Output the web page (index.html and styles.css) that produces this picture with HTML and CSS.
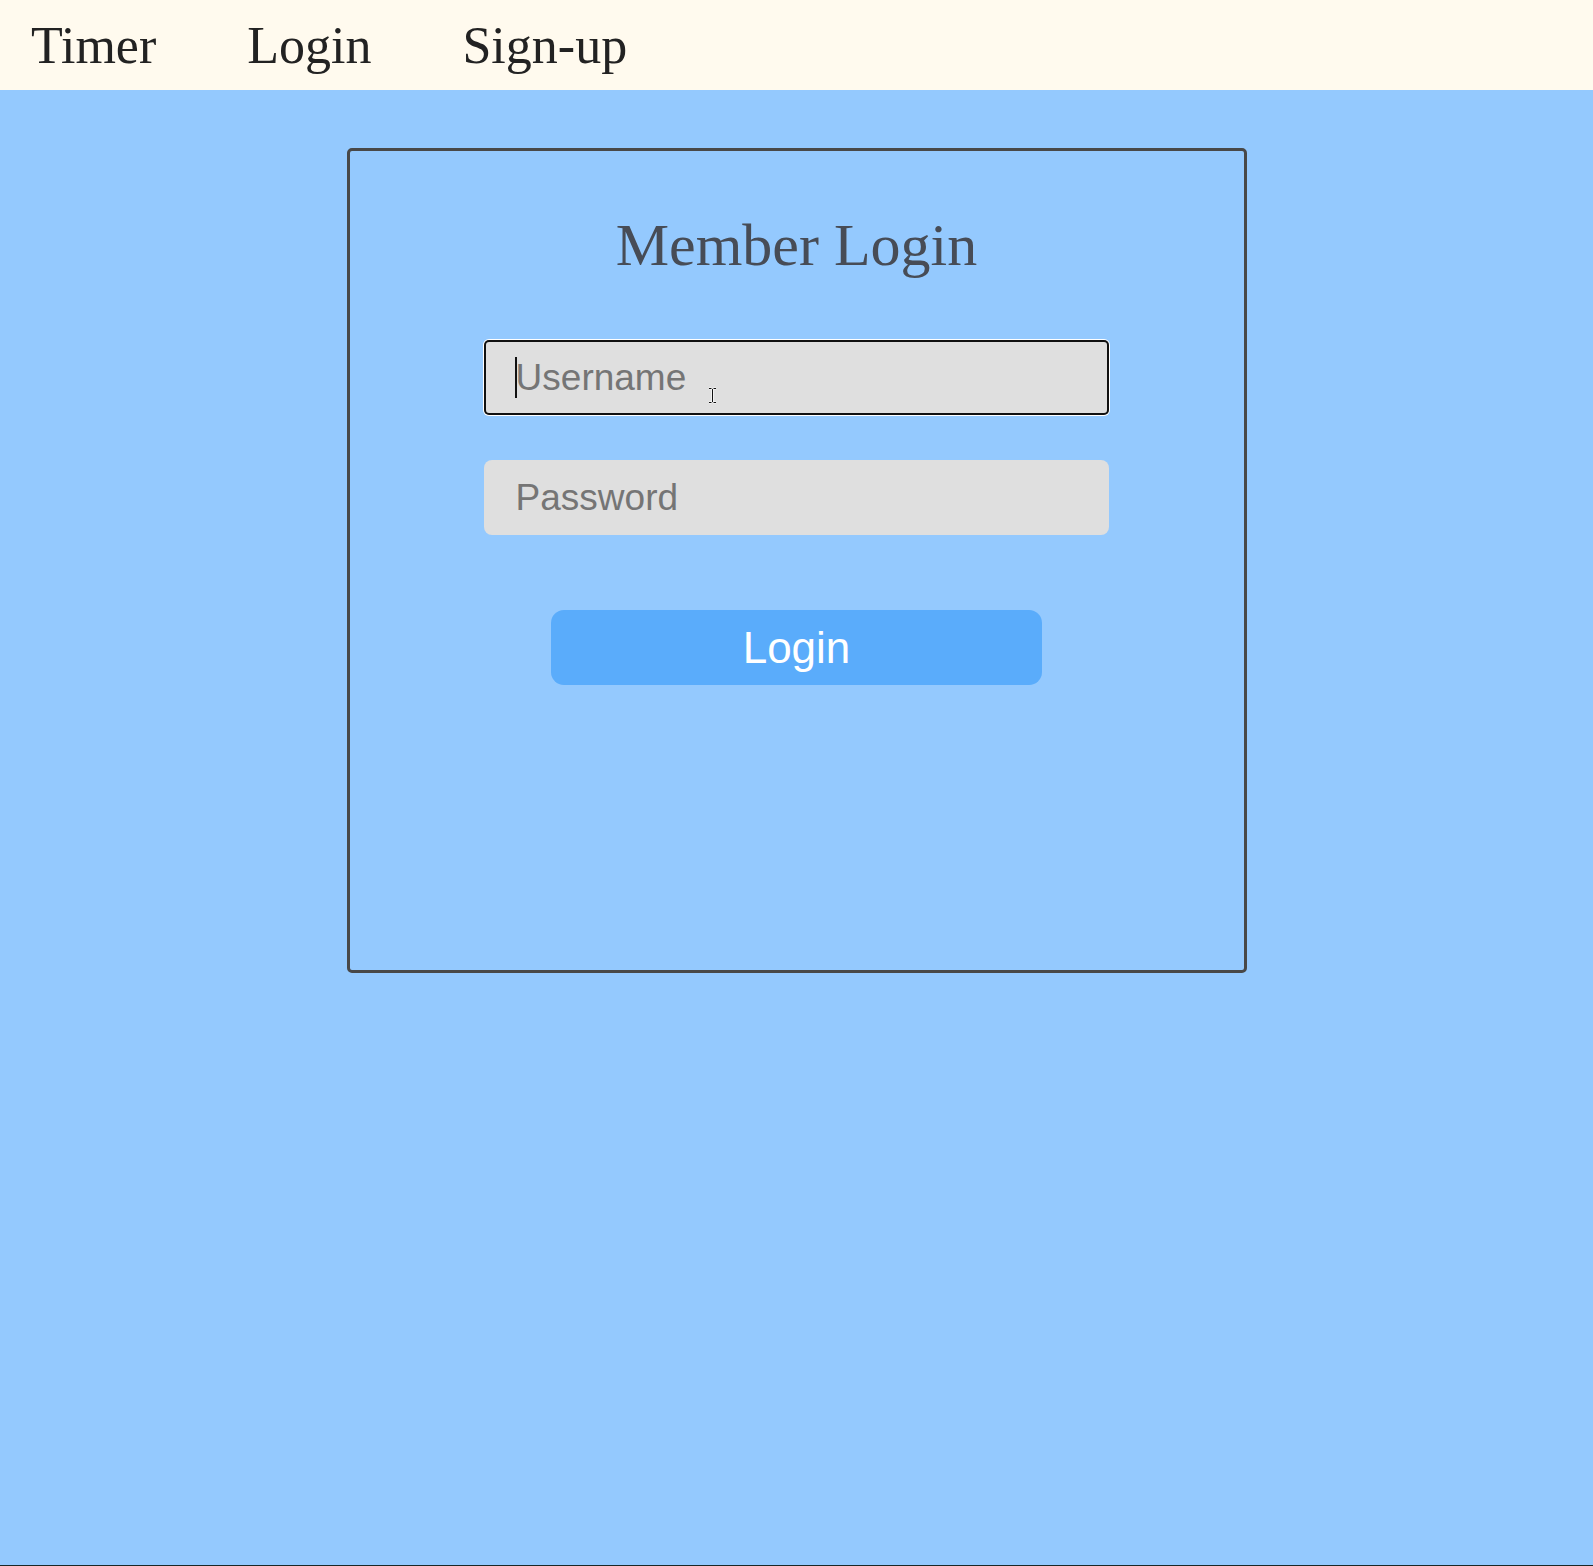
FILE: index.html
```html
<!DOCTYPE html>
<html lang="en">
<head>
<meta charset="utf-8">
<title>Member Login</title>
<link rel="stylesheet" href="styles.css">
</head>
<body>
<div class="page">
  <nav class="topnav">
    <a class="nav-link" href="#">Timer</a>
    <a class="nav-link" href="#">Login</a>
    <a class="nav-link" href="#">Sign-up</a>
  </nav>
  <main class="main">
    <section class="card">
      <h1 class="card-title">Member Login</h1>
      <form class="login-form">
        <div class="field field-focused">
          <input class="text-input" type="text" placeholder="Username">
          <span class="caret"></span>
          <svg class="ibeam" width="9" height="17" viewBox="0 0 9 17">
            <path d="M1 1.5h2.5M5.5 1.5H8M4.5 2v13M1 15.5h2.5M5.5 15.5H8" stroke="#fff" stroke-width="2.2" fill="none"/>
            <path d="M1 1.5h2.5M5.5 1.5H8M4.5 2v13M1 15.5h2.5M5.5 15.5H8" stroke="#111" stroke-width="1" fill="none"/>
          </svg>
        </div>
        <div class="field">
          <input class="text-input" type="password" placeholder="Password">
        </div>
        <button class="login-btn" type="button">Login</button>
      </form>
    </section>
  </main>
</div>
</body>
</html>
```

FILE: styles.css
```css
html, body {
  margin: 0;
  padding: 0;
}

body {
  background: #94c9fe;
}

.page {
  min-height: 1566px;
  box-sizing: border-box;
  display: flex;
  flex-direction: column;
  border-bottom: 1px solid #1a2727;
}

.topnav {
  height: 90px;
  box-sizing: border-box;
  background: #fffaee;
  display: flex;
  align-items: flex-start;
  gap: 91px;
  padding: 16px 0 0 31px;
}

.nav-link {
  font-family: "Liberation Serif", "Times New Roman", serif;
  font-size: 52px;
  line-height: normal;
  color: #222;
  text-decoration: none;
}

.main {
  flex: 1;
  background: #94c9fe;
  padding-top: 58px;
}

.card {
  width: 900px;
  height: 825px;
  box-sizing: border-box;
  margin: 0 auto;
  border: 3px solid #484848;
  border-radius: 5px;
  padding-top: 60px;
  display: flex;
  flex-direction: column;
  align-items: center;
}

.card-title {
  margin: 0;
  font-family: "Liberation Serif", "Times New Roman", serif;
  font-weight: normal;
  font-size: 60px;
  line-height: normal;
  color: #474c56;
}

.login-form {
  width: 100%;
  margin-top: 60px;
  display: flex;
  flex-direction: column;
  align-items: center;
}

.field {
  position: relative;
  width: 70%;
  margin-bottom: 45px;
}

.text-input {
  display: block;
  width: 100%;
  height: 75px;
  box-sizing: border-box;
  border: none;
  border-radius: 8px;
  background: #dfdfdf;
  padding: 0 20px 0 32px;
  font-family: "Liberation Sans", Arial, sans-serif;
  font-size: 37px;
  color: #222;
  outline: none;
}

.text-input::placeholder {
  color: #757575;
  opacity: 1;
}

.field-focused .text-input {
  border-radius: 5px;
  box-shadow: inset 0 0 0 2px #101010, 0 0 0 1px #ffffff;
}

.caret {
  position: absolute;
  left: 31px;
  top: 17px;
  width: 2px;
  height: 41px;
  background: #111;
}

.ibeam {
  position: absolute;
  left: 224px;
  top: 47px;
}

.login-btn {
  width: 55%;
  height: 75px;
  margin-top: 30px;
  border: none;
  border-radius: 13px;
  background: #5aacfb;
  color: #ffffff;
  font-family: "Liberation Sans", Arial, sans-serif;
  font-size: 44px;
  line-height: 1;
  padding: 0;
  cursor: pointer;
}
```
